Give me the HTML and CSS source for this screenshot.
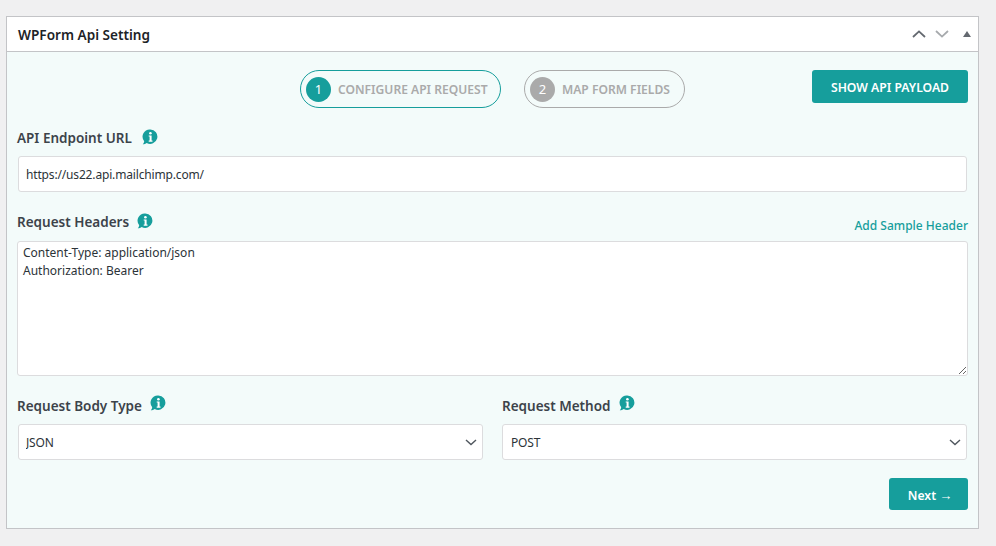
FILE: index.html
```html
<!DOCTYPE html>
<html lang="en">
<head>
<meta charset="utf-8">
<title>WPForm Api Setting</title>
<link rel="stylesheet" href="styles.css">
</head>
<body>
<svg class="defs" width="0" height="0" aria-hidden="true">
  <symbol id="info" viewBox="0 0 16 16">
    <path fill="#169e9c" d="M8.3 0.5a7.2 7.2 0 1 1 -3.6 13.5c-1 .8-2.4 1.3-3.9 1.3c.8-.9 1.3-1.9 1.4-3.1a7.2 7.2 0 0 1 6.1-11.7z"/>
    <circle cx="8.4" cy="4.3" r="1.3" fill="#fff"/>
    <path fill="#fff" d="M6.7 6.4h2.9v5.2h.9v1.2H6.7v-1.2h.9V7.6h-.9z"/>
  </symbol>
  <symbol id="chev" viewBox="0 0 12 7">
    <path fill="none" stroke="#50575e" stroke-width="1.4" d="M1 1l5 4.6L11 1"/>
  </symbol>
</svg>
<section class="panel">
  <header class="panel-head">
    <h2 class="panel-title">WPForm Api Setting</h2>
    <div class="head-tools">
      <svg width="14" height="8" viewBox="0 0 14 8"><path fill="none" stroke="#646970" stroke-width="1.8" d="M1 7l6-5.6L13 7"/></svg>
      <svg width="14" height="8" viewBox="0 0 14 8"><path fill="none" stroke="#a7aaad" stroke-width="1.8" d="M1 1l6 5.6L13 1"/></svg>
      <svg class="tool-tri" width="8" height="6" viewBox="0 0 8 6"><path fill="#646970" d="M4 0l4 6H0z"/></svg>
    </div>
  </header>
  <div class="panel-body">
    <div class="steps-row">
      <div class="steps">
        <div class="step step-active"><span class="step-num">1</span><span class="step-text">CONFIGURE API REQUEST</span></div>
        <div class="step"><span class="step-num">2</span><span class="step-text">MAP FORM FIELDS</span></div>
      </div>
      <button class="btn btn-payload" type="button">SHOW API PAYLOAD</button>
    </div>

    <div class="label-row label-url">
      <span class="label">API Endpoint URL</span>
      <svg class="info" width="16" height="16"><use href="#info"/></svg>
    </div>
    <input class="field field-url" type="text" value="https://us22.api.mailchimp.com/">

    <div class="label-row label-headers">
      <span class="label">Request Headers</span>
      <svg class="info" width="16" height="16"><use href="#info"/></svg>
      <a class="sample" href="#">Add Sample Header</a>
    </div>
    <textarea class="area">Content-Type: application/json
Authorization: Bearer</textarea>

    <div class="two-col">
      <div class="col col-left">
        <div class="label-row">
          <span class="label">Request Body Type</span>
          <svg class="info info-high" width="16" height="16"><use href="#info"/></svg>
        </div>
        <div class="select-wrap">
          <select class="field select"><option>JSON</option></select>
          <svg class="chev" width="12" height="7"><use href="#chev"/></svg>
        </div>
      </div>
      <div class="col col-right">
        <div class="label-row">
          <span class="label">Request Method</span>
          <svg class="info info-high" width="16" height="16"><use href="#info"/></svg>
        </div>
        <div class="select-wrap">
          <select class="field select"><option>POST</option></select>
          <svg class="chev" width="12" height="7"><use href="#chev"/></svg>
        </div>
      </div>
    </div>

    <div class="foot">
      <button class="btn btn-next" type="button">Next <span class="arrow">→</span></button>
    </div>
  </div>
</section>
</body>
</html>
```
FILE: styles.css
```css
* { box-sizing: border-box; }
html, body { height: 100%; }
body {
  margin: 0;
  padding: 16px 17px 0 6px;
  background: #f0f0f1;
  font-family: "Noto Sans", "Open Sans", "Liberation Sans", sans-serif;
  color: #3c434a;
  overflow: hidden;
}
.defs { position: absolute; }
.panel {
  height: 513px;
  border: 1px solid #c3c4c7;
  background: #f3fbfa;
  display: flex;
  flex-direction: column;
}
.panel-head {
  height: 35px;
  flex: none;
  background: #fff;
  border-bottom: 1px solid #c3c4c7;
  display: flex;
  align-items: center;
  justify-content: space-between;
  padding: 0 7px 0 11px;
}
.panel-title {
  margin: 0;
  font-size: 13.6px;
  font-weight: 600;
  color: #1d2327;
}
.head-tools { display: flex; align-items: center; gap: 9px; }
.tool-tri { margin-left: 5px; }
.panel-body {
  flex: 1;
  padding: 18px 10px 0 10px;
  display: flex;
  flex-direction: column;
}
.steps-row {
  height: 38px;
  display: flex;
  justify-content: space-between;
  align-items: flex-start;
}
.steps { display: flex; gap: 23px; margin-left: 283px; }
.step {
  width: 201px;
  height: 38px;
  border: 1px solid #aaa;
  border-radius: 19px;
  display: flex;
  align-items: center;
  padding: 0 0 0 5px;
  gap: 7px;
  font-size: 12.1px;
  font-weight: 600;
  color: #aaa;
}
.step + .step { width: 161px; }
.step-active { border-color: #169e9c; }
.step-num {
  width: 25px;
  height: 25px;
  border-radius: 50%;
  background: #aaa;
  color: #fff;
  font-weight: 400;
  font-size: 13px;
  display: flex;
  align-items: center;
  justify-content: center;
}
.step-active .step-num { background: #169e9c; }
.btn {
  border: 0;
  border-radius: 3px;
  background: #169e9c;
  color: #fff;
  font-family: inherit;
  font-weight: 600;
  font-size: 12.2px;
  padding: 1px 0 0;
  cursor: pointer;
}
.btn-payload { width: 156px; height: 33px; }
.label-row {
  display: flex;
  align-items: center;
  gap: 8px;
  height: 20px;
}
.label-url { margin-top: 20px; gap: 10px; }
.label-headers { margin-top: 20px; }
.label {
  font-size: 13.5px;
  font-weight: 600;
  color: #3c434a;
}
.info { flex: none; margin-top: -3px; }
.info-high { margin-top: -6px; }
.field {
  display: block;
  width: 100%;
  height: 36px;
  padding: 0 7px;
  background: #fff;
  border: 1px solid #dcdcde;
  border-radius: 3px;
  font-family: inherit;
  font-size: 12px;
  letter-spacing: -0.16px;
  color: #2c3338;
}
.field-url { width: 949px; margin: 8px 0 0 1px; }
.sample {
  margin-left: auto;
  margin-top: 6px;
  font-size: 12px;
  font-weight: 500;
  color: #169e9c;
  text-decoration: none;
}
.area {
  display: block;
  width: 951px;
  height: 135px;
  margin-top: 9px;
  padding: 2px 5px;
  background: #fff;
  border: 1px solid #dcdcde;
  border-radius: 3px;
  font-family: inherit;
  font-size: 12px;
  line-height: 18px;
  color: #2c3338;
}
.two-col {
  display: grid;
  grid-template-columns: 466px 465px;
  gap: 19px;
  margin-top: 20px;
}
.select-wrap { position: relative; margin-top: 8px; }
.col-left .select-wrap { margin-left: 1px; }
.col-right .select { padding-left: 8px; }
.select { appearance: none; -webkit-appearance: none; }
.chev { position: absolute; right: 6px; top: 15px; }
.foot {
  display: flex;
  justify-content: flex-end;
  margin-top: 18px;
}
.btn-next { width: 79px; height: 32px; padding: 2px 0 0 3px; }
.arrow { font-family: "Liberation Sans", sans-serif; font-size: 13px; }
```
